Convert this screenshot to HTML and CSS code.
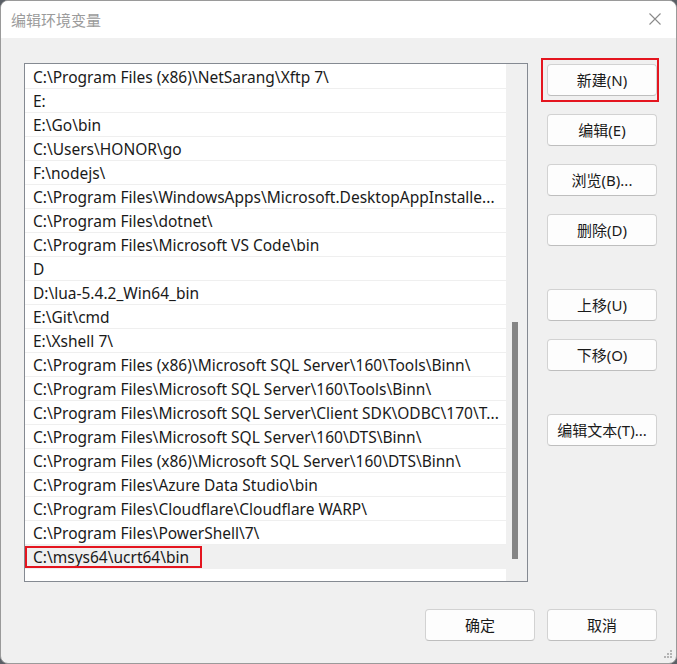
FILE: index.html
```html
<!DOCTYPE html>
<html lang="zh-CN">
<head>
<meta charset="utf-8">
<title>编辑环境变量</title>
<link rel="stylesheet" href="styles.css">
</head>
<body>
<div class="window">
  <div class="titlebar">
    <span class="title">编辑环境变量</span>
    <svg class="close" width="14" height="14" viewBox="0 0 14 14"><path d="M1.5 1.5 L12.5 12.5 M12.5 1.5 L1.5 12.5" stroke="#8a8a8a" stroke-width="1.1" fill="none"/></svg>
  </div>
  <div class="content">
    <div class="main">
      <div class="list">
        <div class="rows">
          <div class="row">C:\Program Files (x86)\NetSarang\Xftp 7\</div>
          <div class="row">E:</div>
          <div class="row">E:\Go\bin</div>
          <div class="row">C:\Users\HONOR\go</div>
          <div class="row">F:\nodejs\</div>
          <div class="row">C:\Program Files\WindowsApps\Microsoft.DesktopAppInstalle...</div>
          <div class="row">C:\Program Files\dotnet\</div>
          <div class="row">C:\Program Files\Microsoft VS Code\bin</div>
          <div class="row">D</div>
          <div class="row">D:\lua-5.4.2_Win64_bin</div>
          <div class="row">E:\Git\cmd</div>
          <div class="row">E:\Xshell 7\</div>
          <div class="row">C:\Program Files (x86)\Microsoft SQL Server\160\Tools\Binn\</div>
          <div class="row">C:\Program Files\Microsoft SQL Server\160\Tools\Binn\</div>
          <div class="row">C:\Program Files\Microsoft SQL Server\Client SDK\ODBC\170\T...</div>
          <div class="row">C:\Program Files\Microsoft SQL Server\160\DTS\Binn\</div>
          <div class="row">C:\Program Files (x86)\Microsoft SQL Server\160\DTS\Binn\</div>
          <div class="row">C:\Program Files\Azure Data Studio\bin</div>
          <div class="row">C:\Program Files\Cloudflare\Cloudflare WARP\</div>
          <div class="row">C:\Program Files\PowerShell\7\</div>
          <div class="row selected"><span class="mark"></span>C:\msys64\ucrt64\bin</div>
        </div>
        <div class="scrollbar"><div class="thumb"></div></div>
      </div>
      <div class="side">
        <div class="btn-wrap"><span class="mark-btn"></span><button class="btn">新建(N)</button></div>
        <button class="btn">编辑(E)</button>
        <button class="btn">浏览(B)...</button>
        <button class="btn">删除(D)</button>
        <button class="btn gap-top">上移(U)</button>
        <button class="btn">下移(O)</button>
        <button class="btn gap-top">编辑文本(T)...</button>
      </div>
    </div>
    <div class="footer">
      <button class="btn">确定</button>
      <button class="btn">取消</button>
    </div>
  </div>
  <svg class="grip" width="14" height="14" viewBox="0 0 14 14">
    <rect x="10" y="2" width="2" height="2" fill="#b4b4b4"/>
    <rect x="7" y="5" width="2" height="2" fill="#b4b4b4"/>
    <rect x="10" y="5" width="2" height="2" fill="#b4b4b4"/>
    <rect x="4" y="8" width="2" height="2" fill="#b4b4b4"/>
    <rect x="7" y="8" width="2" height="2" fill="#b4b4b4"/>
    <rect x="10" y="8" width="2" height="2" fill="#b4b4b4"/>
  </svg>
</div>
</body>
</html>
```

FILE: styles.css
```css
html, body {
  margin: 0;
  padding: 0;
  background: #5a5f66;
}
body {
  width: 677px;
  height: 664px;
  overflow: hidden;
  font-family: "Noto Sans", "Noto Sans CJK SC", sans-serif;
  font-size: 15px;
  color: #1a1a1a;
}
.window {
  position: relative;
  box-sizing: border-box;
  width: 677px;
  height: 664px;
  border: 1px solid #9a9a9a;
  border-radius: 8px;
  background: #f0f0f0;
  overflow: hidden;
  display: flex;
  flex-direction: column;
}
.titlebar {
  height: 37px;
  flex: none;
  background: #ffffff;
  display: flex;
  align-items: center;
  justify-content: space-between;
  padding: 0 14px 0 10px;
}
.title {
  font-family: "Noto Sans CJK SC", sans-serif;
  font-size: 15px;
  color: #9b9b9b;
  margin-top: -1px;
}
.close {
  display: block;
  margin-top: -1px;
}
.content {
  flex: 1;
  padding: 25px 19px 0 23px;
  display: flex;
  flex-direction: column;
}
.main {
  display: flex;
  gap: 19px;
}
.list {
  box-sizing: border-box;
  width: 504px;
  height: 519px;
  border: 1px solid #858a92;
  background: #ffffff;
  display: flex;
}
.rows {
  flex: 1;
  min-width: 0;
  padding-top: 1px;
}
.row {
  position: relative;
  box-sizing: border-box;
  height: 24px;
  line-height: 22px;
  padding: 1px 0 0 8px;
  border-bottom: 1px solid #efefef;
  font-size: 15.5px;
  white-space: nowrap;
  overflow: hidden;
}
.row.selected {
  background: #f0f0f0;
  border-bottom-color: #f0f0f0;
  overflow: visible;
}
.mark {
  position: absolute;
  left: 0;
  top: 1px;
  width: 173px;
  height: 18px;
  border: 2px solid #e4151f;
}
.scrollbar {
  width: 21px;
  background: #f0f0f0;
  position: relative;
  flex: none;
}
.thumb {
  position: absolute;
  left: 6px;
  top: 258px;
  width: 6px;
  height: 237px;
  background: #858585;
}
.side {
  display: flex;
  flex-direction: column;
  gap: 18px;
  padding-top: 1px;
}
.btn {
  box-sizing: border-box;
  width: 110px;
  height: 32px;
  background: #fdfdfd;
  border: 1px solid #d2d2d2;
  border-bottom-color: #bebebe;
  border-radius: 4px;
  font-family: "Noto Sans", "Noto Sans CJK SC", sans-serif;
  font-size: 15px;
  color: #1a1a1a;
  padding: 0 0 2px 0;
  margin: 0;
  display: block;
}
.gap-top {
  margin-top: 25px;
}
.btn-wrap {
  position: relative;
}
.mark-btn {
  position: absolute;
  left: -6px;
  top: -6px;
  width: 114px;
  height: 40px;
  border: 2px solid #e4151f;
}
.footer {
  display: flex;
  justify-content: flex-end;
  gap: 12px;
  margin-top: 27px;
}
.grip {
  position: absolute;
  right: 2px;
  bottom: 1px;
}
```
